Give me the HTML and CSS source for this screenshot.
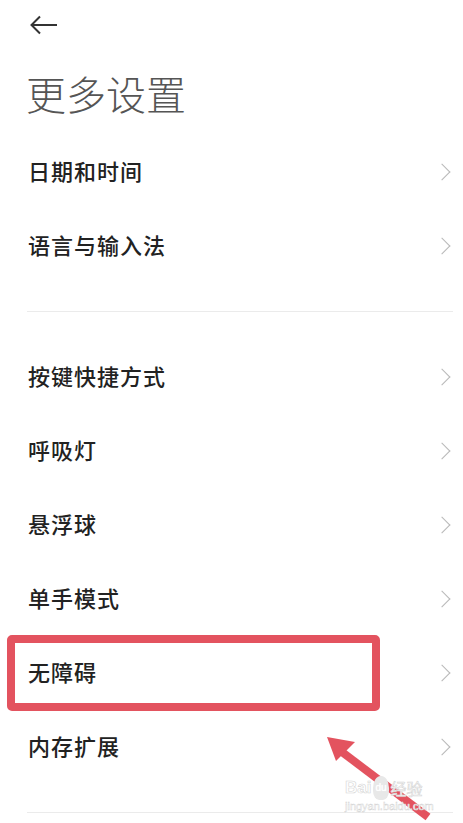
FILE: index.html
```html
<!DOCTYPE html>
<html lang="zh-CN">
<head>
    <meta charset="UTF-8">
    <meta name="viewport" content="width=device-width, initial-scale=1.0">
    <title>更多设置</title>
    <link rel="stylesheet" href="styles.css">
</head>
<body>
    <div class="page">
        <div class="topbar">
            <svg class="back" width="28" height="20" viewBox="0 0 28 20">
                <path d="M27 10H2M10 1.5L1.5 10L10 18.5" fill="none" stroke="#333" stroke-width="2"/>
            </svg>
        </div>
        <h1 class="title">更多设置</h1>

        <div class="group first">
            <div class="row"><span>日期和时间</span><i class="chev"></i></div>
            <div class="row"><span>语言与输入法</span><i class="chev"></i></div>
        </div>
        <div class="divider"></div>
        <div class="group">
            <div class="row"><span>按键快捷方式</span><i class="chev"></i></div>
            <div class="row"><span>呼吸灯</span><i class="chev"></i></div>
            <div class="row"><span>悬浮球</span><i class="chev"></i></div>
            <div class="row"><span>单手模式</span><i class="chev"></i></div>
            <div class="row marked"><span>无障碍</span><i class="chev"></i><div class="highlight"></div></div>
            <div class="row"><span>内存扩展</span><i class="chev"></i></div>
        </div>
        <div class="divider last"></div>

        <!-- annotation arrow on top of the screenshot -->
        <svg class="pointer" width="130" height="100" viewBox="0 0 130 100">
            <path d="M106 85L20 20" stroke="#e3535f" stroke-width="8" fill="none"/>
            <path d="M5 5L33 10L14 29Z" fill="#e3535f"/>
        </svg>

        <div class="watermark">
            <div class="wm-top"><span class="wm-bai">Bai</span><span class="wm-paw">du</span><span class="wm-cn">经验</span></div>
            <div class="wm-url">jingyan.baidu.com</div>
        </div>
    </div>
</body>
</html>
```
FILE: styles.css
```css
body {
    margin: 0;
    padding: 0;
    background-color: #fff;
    font-family: "Noto Sans CJK SC", "Noto Sans", sans-serif;
}
.page {
    position: relative;
    width: 463px;
    height: 823px;
    overflow: hidden;
}
.topbar {
    height: 50px;
    display: flex;
    align-items: center;
    padding-left: 30px;
}
.title {
    margin: 18px 0 0 26px;
    font-size: 40px;
    line-height: 50px;
    font-weight: 300;
    color: #555;
}
.group.first {
    margin-top: 18px;
}
.row {
    position: relative;
    height: 74px;
    display: flex;
    align-items: center;
    justify-content: space-between;
    padding: 0 11px 0 28px;
    font-size: 22px;
    font-weight: 500;
    color: #222;
    letter-spacing: 1px;
}
.row span {
    margin-bottom: 6px;
}
.chev {
    width: 12px;
    height: 12px;
    box-sizing: border-box;
    border-top: 1.5px solid #b8b8b8;
    border-right: 1.5px solid #b8b8b8;
    transform: rotate(45deg);
    margin-right: 4px;
    margin-bottom: 2px;
}
.divider {
    height: 1px;
    background-color: #ebebeb;
    margin: 27px 10px 29px 27px;
}
.divider.last {
    margin-top: 27px;
}
.highlight {
    position: absolute;
    left: 7px;
    top: -2px;
    width: 357px;
    height: 60px;
    border: 8px solid #e3535f;
    border-radius: 5px;
}
.pointer {
    position: absolute;
    left: 322px;
    top: 732px;
}
.watermark {
    position: absolute;
    left: 345px;
    top: 776px;
    color: #e2e2e2;
    text-shadow: 0 0 1px #fff;
    font-family: "Liberation Sans", sans-serif;
}
.wm-top {
    display: flex;
    align-items: center;
    gap: 2px;
    font-size: 17px;
    line-height: 22px;
}
.wm-bai {
    font-weight: bold;
    -webkit-text-stroke: 0.6px #d5d5d5;
    color: #fff;
}
.wm-paw {
    font-size: 10px;
    color: #fff;
    background-color: #e8e8e8;
    border-radius: 50% 50% 40% 40%;
    padding: 1px 2px;
}
.wm-cn {
    font-family: "Noto Sans CJK SC", sans-serif;
    font-size: 16px;
    color: #fff;
    -webkit-text-stroke: 0.6px #d5d5d5;
}
.wm-url {
    font-size: 11px;
    line-height: 13px;
    color: #fff;
    -webkit-text-stroke: 0.4px #d0d0d0;
}
```
